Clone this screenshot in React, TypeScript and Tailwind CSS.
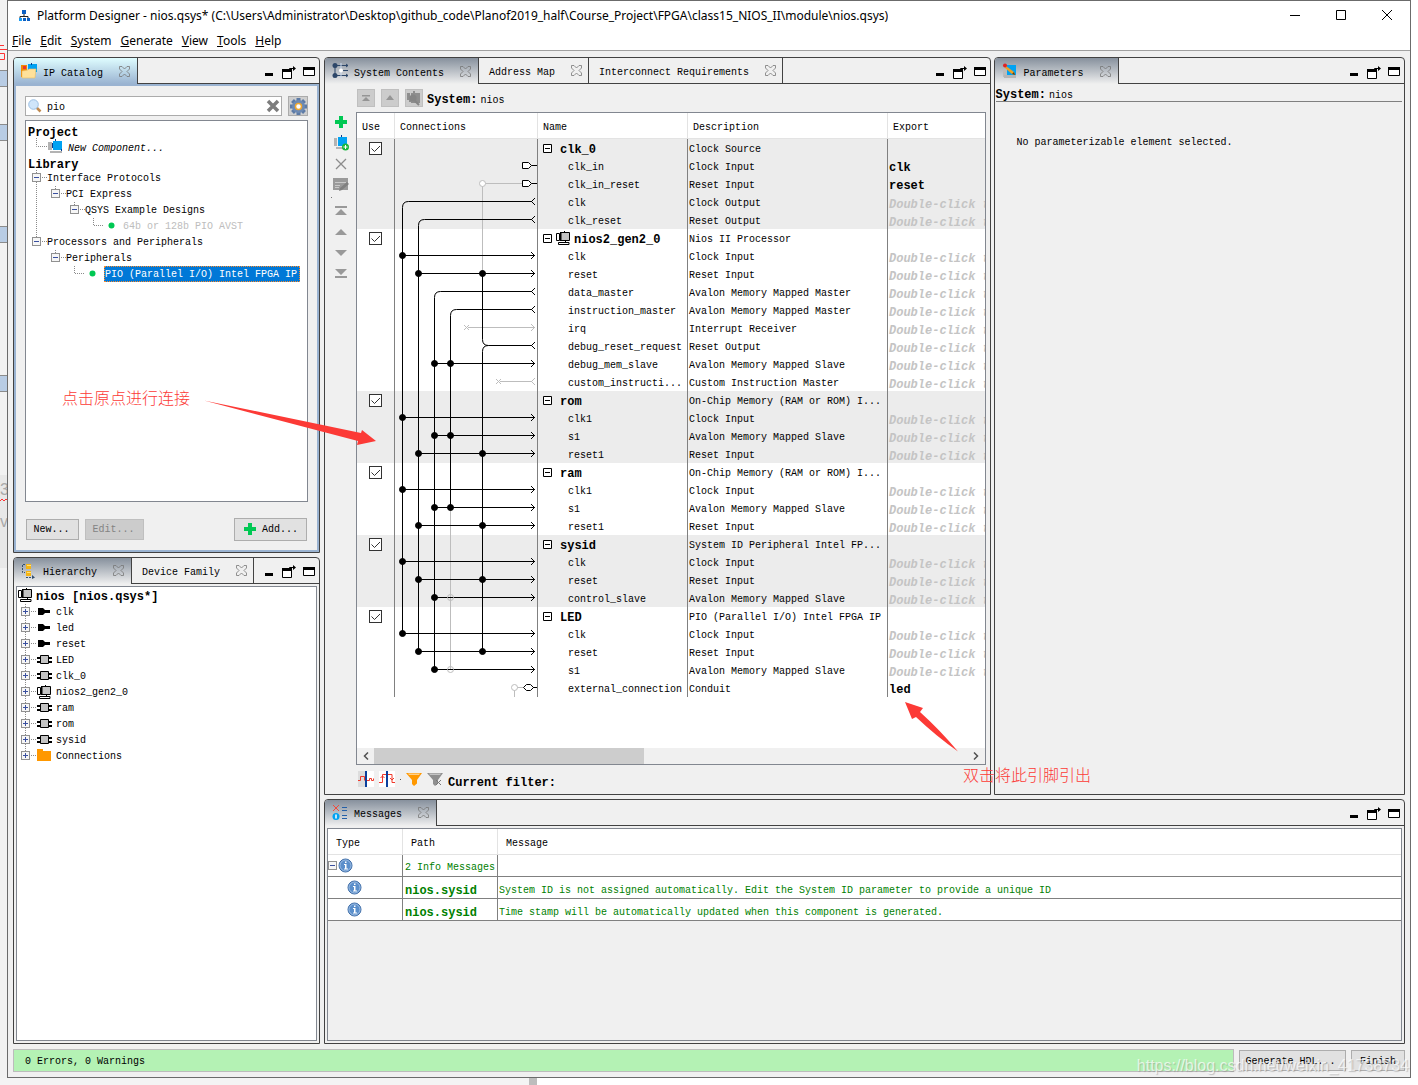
import React from "react";

type Row = { name: string; desc: string; exp?: string };
type Module = { name: string; desc: string; cpu?: boolean; rows: Row[] };

const HINT = "Double-click to";

const modules: Module[] = [
  {
    name: "clk_0",
    desc: "Clock Source",
    rows: [
      { name: "clk_in", desc: "Clock Input", exp: "clk" },
      { name: "clk_in_reset", desc: "Reset Input", exp: "reset" },
      { name: "clk", desc: "Clock Output" },
      { name: "clk_reset", desc: "Reset Output" },
    ],
  },
  {
    name: "nios2_gen2_0",
    desc: "Nios II Processor",
    cpu: true,
    rows: [
      { name: "clk", desc: "Clock Input" },
      { name: "reset", desc: "Reset Input" },
      { name: "data_master", desc: "Avalon Memory Mapped Master" },
      { name: "instruction_master", desc: "Avalon Memory Mapped Master" },
      { name: "irq", desc: "Interrupt Receiver" },
      { name: "debug_reset_request", desc: "Reset Output" },
      { name: "debug_mem_slave", desc: "Avalon Memory Mapped Slave" },
      { name: "custom_instructi...", desc: "Custom Instruction Master" },
    ],
  },
  {
    name: "rom",
    desc: "On-Chip Memory (RAM or ROM) I...",
    rows: [
      { name: "clk1", desc: "Clock Input" },
      { name: "s1", desc: "Avalon Memory Mapped Slave" },
      { name: "reset1", desc: "Reset Input" },
    ],
  },
  {
    name: "ram",
    desc: "On-Chip Memory (RAM or ROM) I...",
    rows: [
      { name: "clk1", desc: "Clock Input" },
      { name: "s1", desc: "Avalon Memory Mapped Slave" },
      { name: "reset1", desc: "Reset Input" },
    ],
  },
  {
    name: "sysid",
    desc: "System ID Peripheral Intel FP...",
    rows: [
      { name: "clk", desc: "Clock Input" },
      { name: "reset", desc: "Reset Input" },
      { name: "control_slave", desc: "Avalon Memory Mapped Slave" },
    ],
  },
  {
    name: "LED",
    desc: "PIO (Parallel I/O) Intel FPGA IP",
    rows: [
      { name: "clk", desc: "Clock Input" },
      { name: "reset", desc: "Reset Input" },
      { name: "s1", desc: "Avalon Memory Mapped Slave" },
      { name: "external_connection", desc: "Conduit", exp: "led" },
    ],
  },
];

/* ---------- icons ---------- */

function AppIcon() {
  return (
    <svg width="12" height="12" viewBox="0 0 12 12">
      <path d="M6 4v3M2 8.500V6.500h8v2" stroke="#222" fill="none" />
      <rect x="4" y="0" width="4" height="4" fill="#0a5fc4" />
      <rect x="1" y="8" width="3" height="3" fill="#1a9bf0" />
      <rect x="5" y="8" width="3" height="3" fill="#0a5fc4" />
      <rect x="9" y="8" width="3" height="3" fill="#0a5fc4" />
    </svg>
  );
}

function FolderTabIcon() {
  return (
    <svg width="16" height="16" viewBox="0 0 16 16">
      <path d="M0 2h6v12H0z" fill="#f28a00" />
      <path d="M2 3h3v3H2z" fill="#e8382c" />
      <path d="M7 1h9v8H7z" fill="#00a2f2" />
      <path d="M10 0h1v2h-1z" fill="#0a3c8c" />
      <path d="M1 8l6-1 1-1h7l-1 9H1z" fill="#ffe19a" stroke="#e9bd61" strokeWidth=".6" />
    </svg>
  );
}

function SystemTabIcon() {
  return (
    <svg width="16" height="16" viewBox="0 0 16 16">
      <path d="M3 2v11M3 2.500h13M9 7.500h7M3 12.500h13" stroke="#2d4769" fill="none" />
      <path d="M14 1l2 1.500-2 1.500M14 11l2 1.500-2 1.500" stroke="#2d4769" fill="none" />
      <path d="M9 0v15" stroke="#c8d8ee" />
      <circle cx="3" cy="2.500" r="2.500" fill="#2d4769" />
      <circle cx="3" cy="12.500" r="2.500" fill="#2d4769" />
      <circle cx="9" cy="7.500" r="2" fill="#fff" />
    </svg>
  );
}

function ParametersTabIcon() {
  return (
    <svg width="16" height="16" viewBox="0 0 16 16">
      <path d="M1 7h5v7H1z" fill="#bbb" />
      <path d="M2 12h12v3H2z" fill="#b5b5b5" />
      <path d="M5 2h9v10H5z" fill="#00a2f2" />
      <path d="M4 3l8 6 1 3-3-1-7-6z" fill="#f0a020" />
      <path d="M10 11l2-2 1 3z" fill="#5a3c10" />
      <circle cx="3" cy="2.500" r="2" fill="#e02424" />
    </svg>
  );
}

function HierarchyTabIcon() {
  return (
    <svg width="16" height="16" viewBox="0 0 16 16">
      <path d="M4 1.500H1.500v8H4M5 14.500h9" stroke="#35506f" strokeDasharray="2 1" fill="none" />
      <path d="M5 1h5v5H5zM5 8h5v5H5z" fill="#f5b413" />
      <path d="M6 2h4v1H6zM6 9h4v1H6z" fill="#ffe27a" />
      <path d="M11 12l3 2.500L11 16z" fill="#35506f" />
    </svg>
  );
}

function MessagesTabIcon() {
  return (
    <svg width="16" height="16" viewBox="0 0 16 16">
      <path d="M1 0l6 6M7 0L1 6" stroke="#f04a3c" />
      <path d="M10 2.500h5M10 5.500h5M10 10.500h5M10 13.500h5" stroke="#2460a8" />
      <circle cx="4" cy="11.500" r="3.500" fill="#00a2f2" />
      <path d="M4 9.500v4" stroke="#fff" strokeWidth="1.500" />
    </svg>
  );
}

function CloseGlyph() {
  return (
    <svg width="11" height="11" viewBox="0 0 11 11">
      <path
        d="M.5.5h2.500l2.500 2.500L8 .5h2.500V3L8 5.500 10.500 8v2.500H8L5.500 8 3 10.500H.5V8L3 5.500.5 3z"
        fill="none"
        stroke="#777"
        strokeWidth=".8"
      />
    </svg>
  );
}

function MinimizeIcon() {
  return (
    <svg width="9" height="12" viewBox="0 0 9 12">
      <path d="M0 7h8v3H0z" />
    </svg>
  );
}

function FloatIcon() {
  return (
    <svg width="15" height="13" viewBox="0 0 15 13">
      <path d="M1.500 4h9v8.500h-9z" fill="#fff" stroke="#000" />
      <path d="M1 3h10v3H1zM12 0l3 2.500L12 5z" />
      <path d="M8.500 5V2.500H13" stroke="#000" fill="none" />
    </svg>
  );
}

function MaximizeIcon() {
  return (
    <svg width="12" height="12" viewBox="0 0 12 12">
      <path d="M.5 1.500h11v8H.5z" fill="#fff" stroke="#000" />
      <path d="M0 1h12v3H0z" />
    </svg>
  );
}

function PlusIcon() {
  return (
    <svg width="12" height="12" viewBox="0 0 12 12">
      <path d="M4 0h4v4h4v4H8v4H4V8H0V4h4z" fill="#00c853" />
    </svg>
  );
}

function ComponentIcon() {
  return (
    <svg width="15" height="15" viewBox="0 0 15 15">
      <path d="M0 3h4v8H0zM2 12h12v2H2z" fill="#b3b3b3" />
      <path d="M5 2h9v9H5z" fill="#00a2f2" />
      <path d="M7 0h1v2H7zM4 4h1v5H4zM13 10h1v2h-1z" fill="#0a3c8c" />
    </svg>
  );
}

function AddComponentIcon() {
  return (
    <svg width="16" height="16" viewBox="0 0 16 16">
      <path d="M1 3h3v8H1zM3 12h8v2H3z" fill="#b3b3b3" />
      <path d="M5 2h9v9H5z" fill="#00a2f2" />
      <path d="M8 0h1v2H8z" fill="#0a3c8c" />
      <circle cx="12.500" cy="12" r="3.500" fill="#14b83c" />
      <path d="M12.500 10v4M10.500 12h4" stroke="#fff" />
    </svg>
  );
}

function CpuIcon() {
  return (
    <svg width="14" height="14" viewBox="0 0 14 14">
      <path d="M.5 2.500h3v7h-3z" fill="#fff" stroke="#000" />
      <path d="M5 1.500h8.500v8H5z" fill="#c4c4c4" stroke="#000" />
      <path d="M4 1h1v9H4zM8 0h1v2H8z" />
      <path d="M2.500 11.500h10.500v2H2.500zM9.500 9.500v2" fill="#fff" stroke="#000" />
    </svg>
  );
}

function ChipIcon() {
  return (
    <svg width="15" height="10" viewBox="0 0 15 10">
      <path d="M0 2h4v2H0zM0 6h4v2H0zM11 2h4v2h-4zM11 6h4v2h-4z" />
      <path d="M3.500.5h8v8h-8z" fill="#c4c4c4" stroke="#000" />
    </svg>
  );
}

function PortIcon() {
  return (
    <svg width="15" height="10" viewBox="0 0 15 10">
      <path d="M1 1h5l2 2h5v3H8L6 8H1z" />
    </svg>
  );
}

function FolderIcon() {
  return (
    <svg width="15" height="13" viewBox="0 0 15 13">
      <path d="M0 0h6v2h8v10H0z" fill="#ff9800" />
    </svg>
  );
}

function InfoIcon() {
  return (
    <svg width="15" height="15" viewBox="0 0 15 15">
      <circle cx="7.500" cy="7.500" r="6.500" fill="#5b8fcb" stroke="#3e6ca6" />
      <circle cx="7.500" cy="7.500" r="5.500" fill="none" stroke="#b9d0ec" strokeWidth=".7" />
      <path d="M6 6h2.500v4.500H10v1H6v-1h1V7H6zM7 3.500h1.500v1.500H7z" fill="#fff" />
    </svg>
  );
}

function SearchIcon() {
  return (
    <svg width="14" height="14" viewBox="0 0 14 14">
      <path d="M8.500 8.500l4 4" stroke="#c08a50" strokeWidth="2.500" />
      <circle cx="5.500" cy="5.500" r="4.800" fill="#cfe5fa" stroke="#9cbfe2" />
    </svg>
  );
}

function GearIcon() {
  return (
    <svg width="17" height="17" viewBox="0 0 17 17">
      <g stroke="#5d7ba6" strokeWidth="4">
        <path d="M8.500 0v17M0 8.500h17M2.500 2.500l12 12M14.500 2.500l-12 12" />
      </g>
      <circle cx="8.500" cy="8.500" r="6.500" fill="#6d8ab4" />
      <circle cx="8.500" cy="8.500" r="3" fill="#fff" stroke="#f0a830" strokeWidth="1.500" />
    </svg>
  );
}

function Expander({ plus }: { plus?: boolean }) {
  return (
    <g>
      <rect x="-4" y="-4" width="8" height="8" fill="#f6f6f6" stroke="#919191" />
      <path d={plus ? "M-2.500 0h5M0-2.500v5" : "M-2.500 0h5"} stroke="#3a50a0" />
    </g>
  );
}

/* ---------- panels ---------- */

type TabInfo = { label: string; icon?: React.ReactNode };

function Panel({
  tabs,
  focused,
  className,
  children,
}: {
  tabs: TabInfo[];
  focused?: boolean;
  className: string;
  children: React.ReactNode;
}) {
  return (
    <section
      className={`flex min-h-0 min-w-0 flex-col overflow-hidden rounded-t-[4px] border border-[#424242] bg-[#f0f0f0] ${className}`}
    >
      <header className="flex h-[26px] shrink-0">
        {tabs.map((tab, i) => (
          <div
            key={tab.label}
            className={
              i === 0
                ? `flex items-center border-r border-[#424242] bg-linear-to-b pr-[7px] pl-[7px] ${
                    focused ? "from-[#dffdff] to-[#9ab3d1]" : "from-[#87919d] to-[#f0f0f0]"
                  }`
                : "flex items-center border-r border-b border-[#424242] pr-[6px] pl-[10px]"
            }
          >
            {tab.icon}
            <button className={i === 0 ? "ml-[6px] pt-[5px] whitespace-nowrap" : "pt-[5px] whitespace-nowrap"}>
              {tab.label}
            </button>
            <button aria-label={`Close ${tab.label}`} className="ml-4">
              <CloseGlyph />
            </button>
          </div>
        ))}
        <div className="flex flex-1 items-center justify-end gap-[7px] border-b border-[#424242] pt-[3px] pr-1">
          <button aria-label="Minimize">
            <MinimizeIcon />
          </button>
          <button aria-label="Float">
            <FloatIcon />
          </button>
          <button aria-label="Maximize">
            <MaximizeIcon />
          </button>
        </div>
      </header>
      {children}
    </section>
  );
}

function TreeRow({
  width,
  guide,
  boxX,
  plus,
  icon,
  className,
  children,
}: {
  width: number;
  guide: string;
  boxX?: number;
  plus?: boolean;
  icon?: React.ReactNode;
  className?: string;
  children: React.ReactNode;
}) {
  return (
    <li className="flex h-4 items-center whitespace-nowrap">
      <svg width={width} height="16" className="shrink-0">
        <path d={guide} stroke="#8a8a8a" strokeDasharray="1 1" fill="none" />
        {boxX !== undefined && (
          <g transform={`translate(${boxX} 7.5)`}>
            <Expander plus={plus} />
          </g>
        )}
      </svg>
      {icon}
      <span className={className ?? "pt-[2px]"}>{children}</span>
    </li>
  );
}

const greenDot = (
  <svg width="19" height="16" className="shrink-0">
    <circle cx="7.500" cy="7.500" r="3" fill="#00c853" />
  </svg>
);

function IpCatalog() {
  return (
    <Panel tabs={[{ label: "IP Catalog", icon: <FolderTabIcon /> }]} focused className="flex-[496]">
      <div className="flex min-h-0 flex-1 flex-col border-2 border-[#9ab3d1] px-[9px] pt-[10px] pb-[9px]">
        <div className="flex gap-[6px]">
          <div className="flex h-5 flex-1 items-center border border-[#ababab] bg-white pr-[1px] pl-[2px]">
            <SearchIcon />
            <input
              aria-label="Search IP"
              defaultValue="pio"
              className="ml-[5px] min-w-0 flex-1 bg-transparent pt-[3px] outline-none"
            />
            <button aria-label="Clear search">
              <svg width="14" height="14" viewBox="0 0 14 14">
                <path d="M2 2l10 10M12 2L2 12" stroke="#7d7d7d" strokeWidth="3.500" />
              </svg>
            </button>
          </div>
          <button
            aria-label="Settings"
            className="flex h-5 w-5 items-center justify-center border border-[#ababab] bg-[#cfcfcf]"
          >
            <GearIcon />
          </button>
        </div>
        <ul className="mt-[4px] flex-1 overflow-hidden border border-[#828790] bg-white pt-[1px]">
          <li className="h-4 pl-[2px] text-[12px] leading-[22px] font-bold">Project</li>
          <TreeRow
            width={22}
            guide="M10.500 0v8.500h12"
            icon={<ComponentIcon />}
            className="ml-[5px] pt-[5px] italic"
          >
            New Component...
          </TreeRow>
          <li className="h-4 pl-[2px] text-[12px] leading-[22px] font-bold">Library</li>
          <TreeRow width={21} guide="M10.500 0v16M10 7.500h11" boxX={10.5}>
            Interface Protocols
          </TreeRow>
          <TreeRow width={40} guide="M10.500 0v16M29.500 0v8M29 7.500h11" boxX={29.5}>
            PCI Express
          </TreeRow>
          <TreeRow width={59} guide="M10.500 0v16M48.500 0v8M48 7.500h11" boxX={48.5}>
            QSYS Example Designs
          </TreeRow>
          <TreeRow
            width={78}
            guide="M10.500 0v16M67.500 0v7.500h11"
            icon={greenDot}
            className="pt-[2px] text-[#bdbdbd]"
          >
            64b or 128b PIO AVST
          </TreeRow>
          <TreeRow width={21} guide="M10.500 0v8M10 7.500h11" boxX={10.5}>
            Processors and Peripherals
          </TreeRow>
          <TreeRow width={40} guide="M29.500 0v8M29 7.500h11" boxX={29.5}>
            Peripherals
          </TreeRow>
          <TreeRow
            width={59}
            guide="M48.500 0v7.500h11"
            icon={greenDot}
            className="h-4 border border-dotted border-[#ff8a28] bg-[#0078d7] pr-[2px] leading-4 text-white"
          >
            PIO (Parallel I/O) Intel FPGA IP
          </TreeRow>
        </ul>
        <div className="mt-4 flex items-center">
          <button className="ml-[1px] h-[21px] w-[53px] border border-[#adadad] bg-[#e1e1e1] pt-[2px] pr-[2px]">
            New...
          </button>
          <button
            disabled
            className="ml-[6px] h-[21px] w-[59px] border border-[#bfbfbf] bg-[#cccccc] pt-[2px] pr-[2px] text-[#838383]"
          >
            Edit...
          </button>
          <button className="mr-[1px] ml-auto flex h-[23px] w-[73px] items-center gap-[6px] border border-[#adadad] bg-[#e1e1e1] pl-[9px]">
            <PlusIcon />
            <span className="pt-[2px]">Add...</span>
          </button>
        </div>
      </div>
    </Panel>
  );
}

const hierarchy = [
  { name: "clk", icon: <PortIcon /> },
  { name: "led", icon: <PortIcon /> },
  { name: "reset", icon: <PortIcon /> },
  { name: "LED", icon: <ChipIcon /> },
  { name: "clk_0", icon: <ChipIcon /> },
  { name: "nios2_gen2_0", icon: <CpuIcon /> },
  { name: "ram", icon: <ChipIcon /> },
  { name: "rom", icon: <ChipIcon /> },
  { name: "sysid", icon: <ChipIcon /> },
  { name: "Connections", icon: <FolderIcon /> },
];

function Hierarchy() {
  return (
    <Panel
      tabs={[{ label: "Hierarchy", icon: <HierarchyTabIcon /> }, { label: "Device Family" }]}
      className="flex-[487]"
    >
      <ul className="m-[2px] flex-1 overflow-hidden border border-[#828790] bg-white">
        <li className="flex h-[17px] items-center gap-[4px] pl-[1px] text-[12px] font-bold">
          <CpuIcon />
          <span className="pt-[4px]">nios [nios.qsys*]</span>
        </li>
        {hierarchy.map((item, i) => (
          <TreeRow
            key={item.name}
            width={20}
            guide={i === hierarchy.length - 1 ? "M8.500 0v8M8 7.500h12" : "M8.500 0v16M8 7.500h12"}
            boxX={8.5}
            plus
            icon={<span className="flex w-[19px] items-center">{item.icon}</span>}
          >
            {item.name}
          </TreeRow>
        ))}
      </ul>
    </Panel>
  );
}

/* ---------- connection diagram ---------- */

const ROW = 18;
const rowY = (row: number) => row * ROW + 8.5;
const CLK = 7.5;
const RST = 23.5;
const DATA = 39.5;
const INST = 55.5;
const DBG = 87.5;

// rows that end in an arrow, with the buses they are joined to
const sinks: { row: number; joined: number[]; open?: number[] }[] = [
  { row: 6, joined: [CLK] },
  { row: 7, joined: [RST, DBG] },
  { row: 12, joined: [DATA, INST] },
  { row: 15, joined: [CLK] },
  { row: 16, joined: [DATA, INST] },
  { row: 17, joined: [RST, DBG] },
  { row: 19, joined: [CLK] },
  { row: 20, joined: [DATA, INST] },
  { row: 21, joined: [RST, DBG] },
  { row: 23, joined: [CLK] },
  { row: 24, joined: [RST, DBG] },
  { row: 25, joined: [DATA], open: [INST] },
  { row: 27, joined: [CLK] },
  { row: 28, joined: [RST, DBG] },
  { row: 29, joined: [DATA], open: [INST] },
];

const sources = [
  { row: 3, x: CLK, last: 27 },
  { row: 4, x: RST, last: 28 },
  { row: 8, x: DATA, last: 29 },
  { row: 9, x: INST, last: 20 },
];

function Wires({ firstRow, rows }: { firstRow: number; rows: number }) {
  return (
    <svg
      width="142"
      height={rows * ROW}
      viewBox={`0 ${firstRow * ROW} 142 ${rows * ROW}`}
      className="block"
      fill="none"
      stroke="#000"
    >
      <g stroke="#bdbdbd">
        <path d={`M${DBG} ${rowY(2)}V${rowY(7)}M${DBG} ${rowY(2)}H127`} />
        <path d={`M${INST} ${rowY(20)}V${rowY(29)}`} />
        <path d={`M73 ${rowY(10)}H140m-4-3.500l3.500 3.500-3.500 3.500`} />
        <path d={`M69 ${rowY(10) - 2.5}l5 5m0-5l-5 5`} />
        <path d={`M105 ${rowY(13)}H137m3-3.500l-3.500 3.500 3.500 3.500`} />
        <path d={`M101 ${rowY(13) - 2.5}l5 5m0-5l-5 5`} />
        <path d={`M119.500 ${rowY(30)}V558M119.500 ${rowY(30)}H129`} />
      </g>
      {sources.map((s) => (
        <path
          key={s.row}
          d={`M${s.x} ${rowY(s.last)}V${rowY(s.row) + 6}q0-6 6-6H137m3-3.500l-3.500 3.500 3.500 3.500`}
        />
      ))}
      <path d={`M${DBG} ${rowY(7)}V${rowY(11) - 6}q0 6 6 6H137m3-3.500l-3.500 3.500 3.500 3.500`} />
      <path d={`M${DBG} ${rowY(28)}V${rowY(11) + 6}q0-6 6-6`} />
      {sinks.map((s) => (
        <g key={s.row}>
          <path d={`M${s.joined[0]} ${rowY(s.row)}H140m-4-3.500l3.500 3.500-3.500 3.500`} />
          {s.joined.map((x) => (
            <circle key={x} cx={x} cy={rowY(s.row)} r="3" fill="#000" />
          ))}
          {s.open?.map((x) => (
            <circle key={x} cx={x} cy={rowY(s.row)} r="3" stroke="#bdbdbd" />
          ))}
        </g>
      ))}
      {[1, 2].map((r) => (
        <path key={r} d={`M127.500 ${rowY(r) - 3}h6l3 3-3 3h-6zM136.500 ${rowY(r)}H142`} fill="#fff" />
      ))}
      <circle cx={DBG} cy={rowY(2)} r="3" fill="#fff" stroke="#bdbdbd" />
      <circle cx="119.500" cy={rowY(30)} r="3" fill="#fff" stroke="#bdbdbd" />
      <path d={`M128.500 ${rowY(30)}l3-3h4l3 3-3 3h-4zM138 ${rowY(30)}H142`} fill="#fff" />
    </svg>
  );
}

function ModuleRows({ mod, firstRow, shaded }: { mod: Module; firstRow: number; shaded: boolean }) {
  const count = mod.rows.length + 1;
  return (
    <tbody className={shaded ? "bg-[#ececec]" : "bg-white"}>
      <tr className="h-[18px]">
        <td rowSpan={count} className="border-r border-[#808080] align-top">
          <label className="mt-[3px] ml-3 grid w-[13px]">
            <input
              type="checkbox"
              defaultChecked
              aria-label={`Use ${mod.name}`}
              className="col-start-1 row-start-1 h-[13px] w-[13px] appearance-none border border-[#333] bg-white"
            />
            <svg width="13" height="13" className="pointer-events-none col-start-1 row-start-1">
              <path d="M2.500 6.500l3 3L11 4" stroke="#333" fill="none" />
            </svg>
          </label>
        </td>
        <td rowSpan={count} className="border-r border-[#808080] align-top">
          <Wires firstRow={firstRow} rows={count} />
        </td>
        <td className="border-r border-[#808080]">
          <div className="flex h-[18px] items-center pl-[5px]">
            <button aria-label={`Collapse ${mod.name}`} className={mod.cpu ? "mr-1" : "mr-[8px]"}>
              <svg width="9" height="9" className="block">
                <path d="M.5.5h8v8h-8zM2 4.500h5" fill="#fff" stroke="#000" />
              </svg>
            </button>
            {mod.cpu && (
              <span className="mr-1">
                <CpuIcon />
              </span>
            )}
            <span className="pt-[4px] text-[12px] leading-[14px] font-bold">{mod.name}</span>
          </div>
        </td>
        <td className="truncate border-r border-[#808080] pt-[4px] pl-[1px] leading-[14px]">{mod.desc}</td>
        <td></td>
      </tr>
      {mod.rows.map((row) => (
        <tr key={row.name} className="h-[18px] leading-[14px]">
          <td className="border-r border-[#808080] pt-[4px] pl-[30px] whitespace-nowrap">{row.name}</td>
          <td className="border-r border-[#808080] pt-[4px] pl-[1px] whitespace-nowrap">{row.desc}</td>
          <td
            className={
              row.exp
                ? "pt-[4px] pl-[1px] text-[12px] font-bold"
                : "overflow-hidden pt-[6px] pl-[1px] text-[12px] leading-3 font-bold whitespace-nowrap text-[#c4c4c4] italic"
            }
          >
            {row.exp ?? HINT}
          </td>
        </tr>
      ))}
    </tbody>
  );
}

const toolGlyphs = [
  { label: "Move to top", d: "M1 0h12v2H1zM7 3l6 6H1z" },
  { label: "Move up", d: "M7 2l6 6H1z" },
  { label: "Move down", d: "M1 2h12L7 8z" },
  { label: "Move to bottom", d: "M1 0h12L7 6zM1 7h12v2H1z" },
];

function SideTools() {
  return (
    <div className="flex w-[31px] shrink-0 flex-col items-center pt-[27px]">
      <button aria-label="Add" className="flex h-[21px] items-center">
        <PlusIcon />
      </button>
      <button aria-label="Add component" className="flex h-[21px] items-center">
        <AddComponentIcon />
      </button>
      <button aria-label="Remove" className="flex h-[21px] items-center">
        <svg width="12" height="12" viewBox="0 0 12 12">
          <path d="M1 1l10 10M11 1L1 11" stroke="#8c8c8c" strokeWidth="1.300" />
        </svg>
      </button>
      <button aria-label="Edit" className="flex h-[21px] items-center">
        <svg width="16" height="14" viewBox="0 0 16 14">
          <path d="M0 0h15v12H0z" fill="#9a9a9a" />
          <path d="M2 4.500h11M2 7.500h5M2 9.500h4" stroke="#c9c9c9" />
          <path d="M7 10l7-6 2 2-7 6-3 1z" fill="#808080" />
        </svg>
      </button>
      <div className="mt-[2px] mr-[18px] mb-[2px] h-px w-px bg-[#777]"></div>
      {toolGlyphs.map((g) => (
        <button key={g.label} aria-label={g.label} className="flex h-[21px] items-center">
          <svg width="14" height="10" viewBox="0 0 14 10">
            <path d={g.d} fill="#999" />
          </svg>
        </button>
      ))}
    </div>
  );
}

const squareButton = "flex h-[18px] w-[18px] items-center justify-center border border-[#bfbfbf] bg-[#cccccc]";

function SystemContents() {
  let next = 0;
  return (
    <Panel
      tabs={[
        { label: "System Contents", icon: <SystemTabIcon /> },
        { label: "Address Map" },
        { label: "Interconnect Requirements" },
      ]}
      className="flex-[667]"
    >
      <div className="flex min-h-0 flex-1">
        <SideTools />
        <div className="flex min-w-0 flex-1 flex-col pr-1">
          <div className="flex h-[28px] shrink-0 items-center gap-[6px] pl-[1px]">
            <button aria-label="Top level" className={squareButton}>
              <svg width="8" height="7">
                <path d="M0 0h8v1.500H0zM4 2l4 4H0z" fill="#959595" />
              </svg>
            </button>
            <button aria-label="Up one level" className={squareButton}>
              <svg width="8" height="6">
                <path d="M4 0l4 5H0z" fill="#959595" />
              </svg>
            </button>
            <button aria-label="Drill into component" className={squareButton}>
              <svg width="16" height="15" viewBox="0 0 16 15">
                <path d="M1 2h3v7H1zM5 2h9v10H5zM7 0h2v2H7zM3 9h4v2H3z" fill="#8e8e8e" />
                <circle cx="7" cy="7" r="3.500" fill="#858585" />
                <path d="M9 10l4 4" stroke="#858585" strokeWidth="2" />
              </svg>
            </button>
            <p className="-ml-[2px] pt-[4px]">
              <b className="text-[12px]">System:</b>
              <span className="ml-[3px]">nios</span>
            </p>
          </div>
          <div className="flex min-h-0 flex-1 flex-col border border-[#828790] bg-white">
            <div className="min-h-0 flex-1 overflow-hidden">
              <table className="w-full table-fixed border-separate border-spacing-0">
                <colgroup>
                  <col className="w-[38px]" />
                  <col className="w-[143px]" />
                  <col className="w-[150px]" />
                  <col className="w-[200px]" />
                  <col />
                </colgroup>
                <thead>
                  <tr className="h-[26px] text-left">
                    {["Use", "Connections", "Name", "Description", "Export"].map((h) => (
                      <th
                        key={h}
                        className="border-r border-b border-[#e3e3e3] pt-[5px] pl-[5px] font-normal last:border-r-0"
                      >
                        {h}
                      </th>
                    ))}
                  </tr>
                </thead>
                {modules.map((mod, i) => {
                  const firstRow = next;
                  next += mod.rows.length + 1;
                  return <ModuleRows key={mod.name} mod={mod} firstRow={firstRow} shaded={[0, 2, 4].includes(i)} />;
                })}
              </table>
            </div>
            <div className="flex h-4 shrink-0 bg-[#f0f0f0]">
              <button aria-label="Scroll left" className="flex w-[17px] items-center justify-center">
                <svg width="6" height="8">
                  <path d="M5 .5L1.500 4 5 7.500" stroke="#505050" strokeWidth="1.500" fill="none" />
                </svg>
              </button>
              <div className="flex flex-1">
                <div className="w-[45.5%] bg-[#cdcdcd]"></div>
              </div>
              <button aria-label="Scroll right" className="flex w-[17px] items-center justify-center">
                <svg width="6" height="8">
                  <path d="M1 .5L4.500 4 1 7.500" stroke="#505050" strokeWidth="1.500" fill="none" />
                </svg>
              </button>
            </div>
          </div>
          <div className="flex h-[29px] shrink-0 items-center pl-[2px]">
            <button aria-label="Show clock domains">
              <svg width="16" height="16" viewBox="0 0 16 16">
                <path d="M0 0h8v16H0z" fill="#ddd" />
                <path d="M8 0h8v16H8z" fill="#fff" />
                <path d="M0 9.500h2.500v-4h4v4M9 9.500h2.500v-2h2v2h2v-2" stroke="#f0392b" fill="none" />
                <path d="M8 0v16" stroke="#0b3f9c" strokeWidth="2" />
              </svg>
            </button>
            <button aria-label="Show reset domains" className="ml-[5px]">
              <svg width="16" height="16" viewBox="0 0 16 16">
                <path d="M0 0h16v16H0z" fill="#fff" />
                <path d="M0 11.500h3.500v-8H13v8h3M1.500 7l2-2 2 2M11 7l2 2 2-2" stroke="#f0392b" fill="none" />
                <path d="M8 0v16" stroke="#0b3f9c" strokeWidth="2" />
              </svg>
            </button>
            <span className="mx-[5px] h-px w-px bg-[#555]"></span>
            <button aria-label="Filter">
              <svg width="16" height="14" viewBox="0 0 16 14">
                <path d="M0 1h16l-5 7v3.500L8 14l-2-2V8z" fill="#ff9800" />
                <path d="M2 1.500h12l-1 1.500H3z" fill="#ffd08a" />
              </svg>
            </button>
            <button aria-label="Clear filter" className="ml-[5px]">
              <svg width="16" height="14" viewBox="0 0 16 14">
                <path d="M0 1h16l-5 7v3.500L8 14l-2-2V8z" fill="#8f8f8f" />
                <path d="M2 1.500h12l-1 1.500H3z" fill="#c4c4c4" />
                <path d="M9 8l5 5M14 8l-5 5" stroke="#777" />
              </svg>
            </button>
            <b className="ml-[5px] pt-[7px] text-[12px]">Current filter:</b>
          </div>
        </div>
      </div>
    </Panel>
  );
}

function Parameters() {
  return (
    <Panel tabs={[{ label: "Parameters", icon: <ParametersTabIcon /> }]} className="flex-[411]">
      <div className="px-[2px]">
        <p className="-ml-px h-[18px] border-b border-[#808080] leading-[22px]">
          <b className="text-[12px]">System:</b>
          <span className="ml-[3px]">nios</span>
        </p>
        <p className="px-5 pt-[35px]">No parameterizable element selected.</p>
      </div>
    </Panel>
  );
}

const messages = [
  "System ID is not assigned automatically. Edit the System ID parameter to provide a unique ID",
  "Time stamp will be automatically updated when this component is generated.",
];

function Messages() {
  return (
    <Panel tabs={[{ label: "Messages", icon: <MessagesTabIcon /> }]} className="flex-[244]">
      <div className="m-[2px] flex-1 overflow-hidden border border-[#828790]">
        <table className="w-full table-fixed border-separate border-spacing-0 bg-white">
          <colgroup>
            <col className="w-[75px]" />
            <col className="w-[95px]" />
            <col />
          </colgroup>
          <thead>
            <tr className="h-[26px] text-left">
              {["Type", "Path", "Message"].map((h) => (
                <th
                  key={h}
                  className="border-r border-b border-[#e3e3e3] pt-[5px] pl-2 font-normal last:border-r-0"
                >
                  {h}
                </th>
              ))}
            </tr>
          </thead>
          <tbody className="text-[#008000]">
            <tr className="h-[22px]">
              <td className="border-r border-b border-[#808080]">
                <div className="flex items-center gap-[1px]">
                  <svg width="9" height="9">
                    <g transform="translate(4.5 4.5)">
                      <Expander />
                    </g>
                  </svg>
                  <InfoIcon />
                </div>
              </td>
              <td className="border-r border-b border-[#808080] pt-[5px] pl-[2px] whitespace-nowrap">
                2 Info Messages
              </td>
              <td className="border-b border-[#808080]"></td>
            </tr>
            {messages.map((text) => (
              <tr key={text} className="h-[22px]">
                <td className="border-r border-b border-[#808080] pl-[19px]">
                  <InfoIcon />
                </td>
                <td className="border-r border-b border-[#808080] pt-[7px] pl-[2px] text-[12px] font-bold">
                  nios.sysid
                </td>
                <td className="border-b border-[#808080] pt-[7px] pl-[1px]">{text}</td>
              </tr>
            ))}
          </tbody>
        </table>
      </div>
    </Panel>
  );
}

const menus = ["File", "Edit", "System", "Generate", "View", "Tools", "Help"];

// sliver of the window that lies behind this one
function BackdropStrip() {
  const mark = "border-y border-[#8c8c8c] bg-[#b8cce4]";
  return (
    <div className="flex w-[7px] shrink-0 flex-col overflow-hidden bg-[#f2f2f2]">
      <div className="mt-[45px] h-[15px] text-[#f33]">
        <svg width="7" height="15" className="block">
          <path d="M0 .5h4M0 4.500h7M0 8.500h4.500v6H0" stroke="currentColor" fill="none" />
        </svg>
      </div>
      <div className={`mt-[10px] h-[17px] ${mark}`}></div>
      <div className={`mt-[37px] h-[17px] ${mark}`}></div>
      <div className={`mt-[85px] h-[17px] ${mark}`}></div>
      <div className={`mt-[132px] h-[17px] ${mark}`}></div>
      <div className="mt-[83px] h-[93px] bg-[#e8e8e8] font-['Liberation_Sans'] text-[16px] text-[#aaa]">
        <div className="mt-[5px] h-[19px] leading-[19px]">3</div>
        <svg width="7" height="3" className="block">
          <path d="M0 2l2-2 2 2 2-2 2 2" stroke="#f33" fill="none" />
        </svg>
        <div className="leading-[40px]">v</div>
      </div>
    </div>
  );
}

export default function App() {
  return (
    <div className="relative flex h-screen flex-col overflow-hidden bg-white font-['Liberation_Mono',monospace] text-[10px] leading-3 text-black">
      <div className="flex min-h-0 flex-1">
        <BackdropStrip />
        <div className="mr-[7px] flex min-w-0 flex-1 flex-col border border-[#6b6b6b] bg-[#f0f0f0]">
          <header className="shrink-0 border-b border-[#a0a0a0] bg-white font-['Noto_Sans','Noto_Sans_CJK_SC',sans-serif] text-[12px]">
            <div className="flex h-[29px] items-center pl-[10px]">
              <AppIcon />
              <h1 className="ml-[7px] truncate leading-5">
                Platform Designer - nios.qsys*
                (C:\Users\Administrator\Desktop\github_code\Planof2019_half\Course_Project\FPGA\class15_NIOS_II\module\nios.qsys)
              </h1>
              <div className="ml-auto flex gap-[35px] pr-[17px]">
                <button aria-label="Minimize window">
                  <svg width="11" height="11">
                    <path d="M0 5.500h10" stroke="#000" />
                  </svg>
                </button>
                <button aria-label="Maximize window">
                  <svg width="11" height="11">
                    <path d="M.5.5h9v9h-9z" fill="none" stroke="#000" />
                  </svg>
                </button>
                <button aria-label="Close window">
                  <svg width="11" height="11">
                    <path d="M0 0l10 10M10 0L0 10" stroke="#000" />
                  </svg>
                </button>
              </div>
            </div>
            <nav className="flex h-5 gap-[9px] pl-1">
              {menus.map((m) => (
                <button key={m} className="leading-[22px]">
                  <u>{m[0]}</u>
                  {m.slice(1)}
                </button>
              ))}
            </nav>
          </header>

          <main className="flex min-h-0 flex-1 gap-1 px-[5px] pt-[6px]">
            <div className="flex w-[307px] shrink-0 flex-col gap-1">
              <IpCatalog />
              <Hierarchy />
            </div>
            <div className="flex min-w-0 flex-1 flex-col gap-1">
              <div className="flex min-h-0 flex-[740] gap-[3px]">
                <SystemContents />
                <Parameters />
              </div>
              <Messages />
            </div>
          </main>

          <footer className="flex h-[33px] shrink-0 items-center gap-[5px] px-[5px]">
            <p className="h-[23px] flex-1 border border-[#bcbcbc] bg-[#b4f2b4] pl-[11px] leading-[24px]">
              0 Errors, 0 Warnings
            </p>
            <button className="h-[21px] w-[107px] border border-[#adadad] bg-[#e1e1e1] pt-[2px] pr-1">
              Generate HDL...
            </button>
            <button className="h-[21px] w-[54px] border border-[#adadad] bg-[#e1e1e1] pt-[2px]">Finish</button>
          </footer>
        </div>
      </div>
      <div className="flex h-[7px] shrink-0">
        <div className="w-[529px] bg-[#f4f4f4]"></div>
        <div className="w-[8px] bg-[#bdbdbd]"></div>
      </div>

      {/* annotations drawn over the window */}
      <svg className="pointer-events-none absolute top-0 left-0 h-full w-full" fill="#fc3a36">
        <path d="M204 400.500L361 433l1-3 14 11-19 4 1-4z" />
        <path d="M905 702l18 6-3 4q20 18 38 39.500Q936 736 916 717l-4 2z" />
      </svg>
      <p className="absolute top-[387px] left-[62px] font-['Noto_Sans_CJK_SC',sans-serif] text-[16px] leading-5 font-light text-[#fc3a36]">
        点击原点进行连接
      </p>
      <p className="absolute top-[764px] left-[963px] font-['Noto_Sans_CJK_SC',sans-serif] text-[16px] leading-5 font-light text-[#fc3a36]">
        双击将此引脚引出
      </p>
      <p className="absolute right-[9px] bottom-[9px] font-['Liberation_Sans',sans-serif] text-[16px] leading-5 text-white/70 [text-shadow:1px_1px_1px_rgba(120,120,120,0.4)]">
        https://blog.csdn.net/weixin_41738734
      </p>
    </div>
  );
}
